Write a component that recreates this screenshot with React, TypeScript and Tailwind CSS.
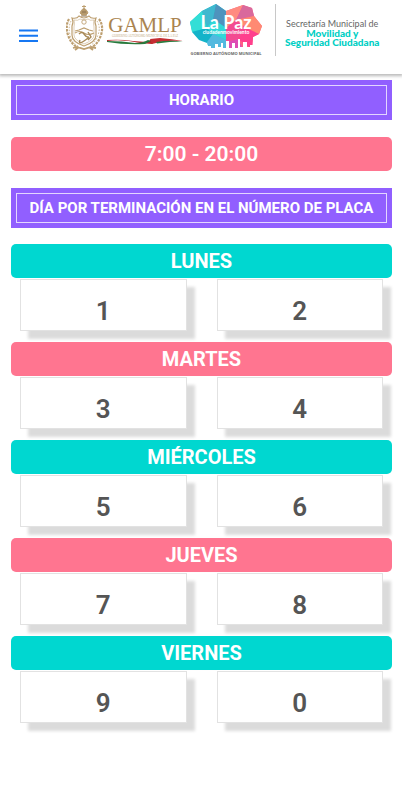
const days = [
  { name: 'LUNES', plates: [1, 2], color: 'bg-[#00d7d0]' },
  { name: 'MARTES', plates: [3, 4], color: 'bg-[#ff7590]' },
  { name: 'MIÉRCOLES', plates: [5, 6], color: 'bg-[#00d7d0]' },
  { name: 'JUEVES', plates: [7, 8], color: 'bg-[#ff7590]' },
  { name: 'VIERNES', plates: [9, 0], color: 'bg-[#00d7d0]' },
];

function Crest() {
  return (
    <svg className="h-[48px] w-[38px] shrink-0" viewBox="0 0 38 48" fill="none" stroke="#bd9f70" aria-hidden="true">
      <path d="M18 1v4M16 2.500h4" strokeWidth="1" />
      <path d="M15 7q3-5 6 0l1 2-2 2h-4l-2-2z" fill="#b5996c" strokeWidth="1" />
      <path d="M16 8h4M15 12h6" stroke="#8d7350" strokeWidth="1" />
      <path d="M6 14q5 1 7-2 3 2 5 2t5-2q2 3 7 2-2 4 0 8v9q0 7-12 11Q6 38 6 31v-9q2-4 0-8z" strokeWidth="1.200" />
      <path d="M8 16q4 1 6-1 4 2 8 0 2 2 6 1-1 3 0 7v8q0 5-10 9Q8 36 8 31v-8q1-4 0-7z" strokeWidth=".5" />
      <circle cx="18" cy="18" r="2.200" strokeWidth=".9" />
      <path d="M9 27l4-1 5-2 5 2 4 1M9 29q5-3 9 0t10 0" strokeWidth="1.200" />
      <path d="M13 30q3-3 5 0t4 3-4 4-4-1M22 28l3 5-3 3" stroke="#a88957" strokeWidth="1.400" />
      <path d="M3 15Q-1 22 2 31t9 12M33 15q5 7 2 16t-9 12" strokeWidth="2.200" strokeDasharray="2.500 1" />
      <path d="M5 17Q2 23 4 31t8 11M31 17q4 6 1 14t-8 11" strokeWidth=".8" strokeDasharray="1.500 1.500" />
      <path d="M7 44l4-1 7 2 7-2 5 1M9 46l4-3M27 46l-4-3" strokeWidth="1.800" />
    </svg>
  );
}

function Gamlp() {
  return (
    <svg className="h-[34px] w-[78px] shrink-0" viewBox="0 0 78 34" role="img" aria-label="GAMLP">
      <text x="39" y="20" textAnchor="middle" fill="#aa8450" className="font-['Liberation_Serif',serif] text-[21px]">GAMLP</text>
      <text x="39" y="25" textAnchor="middle" fill="#c5ad87" className="font-['Liberation_Serif',serif] text-[3px]">GOBIERNO AUTÓNOMO MUNICIPAL DE LA PAZ</text>
      <path d="M1 28q14-1 26 1l14 1 5-3 6 0-6 5-12-1Q17 27 1 29z" fill="#bb2428" />
      <path d="M1 29q15 0 28 2 8 0 13-3l3 1-6 3q-20 1-38-2z" fill="#287a3d" />
      <path d="M44 27l10-1q12 1 23 3-12-1-23 1l-8 2z" fill="#c52e32" />
      <path d="M50 30q13-2 27-.500-14 0-26 2z" fill="#2b7b3e" />
    </svg>
  );
}

function LaPaz() {
  return (
    <svg className="h-[56px] w-[76px] shrink-0" viewBox="0 0 76 56" role="img" aria-label="La Paz ciudad en movimiento">
      <path d="M2 18L14 7 28 0l10 7v38H21l-2-7-8-3-7-8z" fill="#20ccd2" />
      <path d="M2 18L14 7l5 17-15 4z" fill="#33ded6" />
      <path d="M14 7l14-7-3 15-6 9z" fill="#3fb8cf" />
      <path d="M28 0l10 7v17l-13-9z" fill="#4e93bd" />
      <path d="M19 24l-15 4 7 8 8 3 6-9z" fill="#14b3c9" />
      <path d="M19 24l6-9 13 9v12l-13-6z" fill="#31d8d8" />
      <path d="M25 30l13 6v9H21l-2-7z" fill="#53b9df" />
      <path d="M38 7L55 1l9 3 2 8 8 10-3 8-6 3-1 12H38z" fill="#ff5f85" />
      <path d="M38 7l17-6-7 15-10 8z" fill="#ff8b80" />
      <path d="M55 1l9 3 2 8-18 4z" fill="#d9699c" />
      <path d="M66 12l8 10-3 8-13-6-10-8z" fill="#ff8a72" />
      <path d="M38 24l10-8 10 8-8 11-12 3z" fill="#f34b91" />
      <path d="M58 24l13 6-6 3-1 12-14-10z" fill="#ff3f8d" />
      <path d="M38 38l12-3 5 10H38z" fill="#dd4cb4" />
      <path d="M19 46v-4h4v2h4v-4h3v3h3v-4h2v5h3v-7h3v7h3v-5h3v5h3v-9h2v8h3v-5h4v5h3v-2h5v6H19z" fill="#fff" />
      <text x="38" y="25" textAnchor="middle" fill="#fff" className="font-['Lato',sans-serif] text-[18px] font-bold">La Paz</text>
      <text x="38" y="30" textAnchor="middle" fill="#fff" className="font-['Lato',sans-serif] text-[5px] font-bold">ciudadenmovimiento</text>
      <text x="38" y="51" textAnchor="middle" fill="#666" className="font-['Open_Sans',sans-serif] text-[4px] font-bold">GOBIERNO AUTÓNOMO MUNICIPAL</text>
    </svg>
  );
}

function Banner({ children }: { children: string }) {
  return (
    <h2 className="bg-[#915fff] p-[5px] text-[15px] font-bold leading-[28px] text-white">
      <span className="block whitespace-nowrap border border-[#e3d6ff] text-center">{children}</span>
    </h2>
  );
}

export default function App() {
  return (
    <div lang="es" className="min-h-screen bg-white font-['Roboto','Liberation_Sans',sans-serif]">
      <header className="flex h-[74px] items-start bg-white pt-1 shadow-[0_1px_3px_1px_rgba(0,0,0,0.28)]">
        <button type="button" aria-label="Menú" className="ml-[17px] mt-5 flex size-6 shrink-0 items-center justify-center">
          <svg className="size-6" viewBox="0 0 24 24" fill="#1677f2" aria-hidden="true">
            <path d="M2 5.500h19v2H2zM2 10.700h19v2H2zM2 16h19v2H2z" />
          </svg>
        </button>
        <div className="ml-[25px] flex min-w-0 items-start">
          <Crest />
          <div className="ml-[2px] mt-[8px]"><Gamlp /></div>
          <div className="ml-1"><LaPaz /></div>
          <div className="ml-[11px] h-[52px] w-px shrink-0 bg-[#c8c8c8]" />
          <div className="ml-[9px] mt-[14px] whitespace-nowrap text-center font-['Lato',sans-serif] text-[9px] leading-[11px] text-[#666]">
            <p>Secretaría Municipal de</p>
            <p className="text-[10px] font-black leading-[9px] text-[#00cfc4]">Movilidad y<br />Seguridad Ciudadana</p>
          </div>
        </div>
      </header>
      <main className="pl-[11px] pr-[10px] pt-[6px]">
        <Banner>HORARIO</Banner>
        <p className="my-[17px] rounded-[5px] bg-[#ff7590] text-center text-[21px] font-semibold leading-[34px] text-white">7:00 - 20:00</p>
        <Banner>DÍA POR TERMINACIÓN EN EL NÚMERO DE PLACA</Banner>
        <div className="mt-[16px]">
          {days.map((day) => (
            <section key={day.name} className="pb-[11px]">
              <h3 className={`rounded-[5px] text-center text-[20px] font-bold leading-[34px] text-white ${day.color}`}>{day.name}</h3>
              <div className="mt-px grid grid-cols-2 gap-[30px] px-[9px]">
                {day.plates.map((plate) => (
                  <div key={plate} className="border border-[#e2e2e2] bg-white pt-[12px] text-center text-[26px] font-semibold leading-[38px] text-[#555] shadow-[8px_8px_3px_rgba(0,0,0,0.14)]">
                    {plate}
                  </div>
                ))}
              </div>
            </section>
          ))}
        </div>
      </main>
    </div>
  );
}
